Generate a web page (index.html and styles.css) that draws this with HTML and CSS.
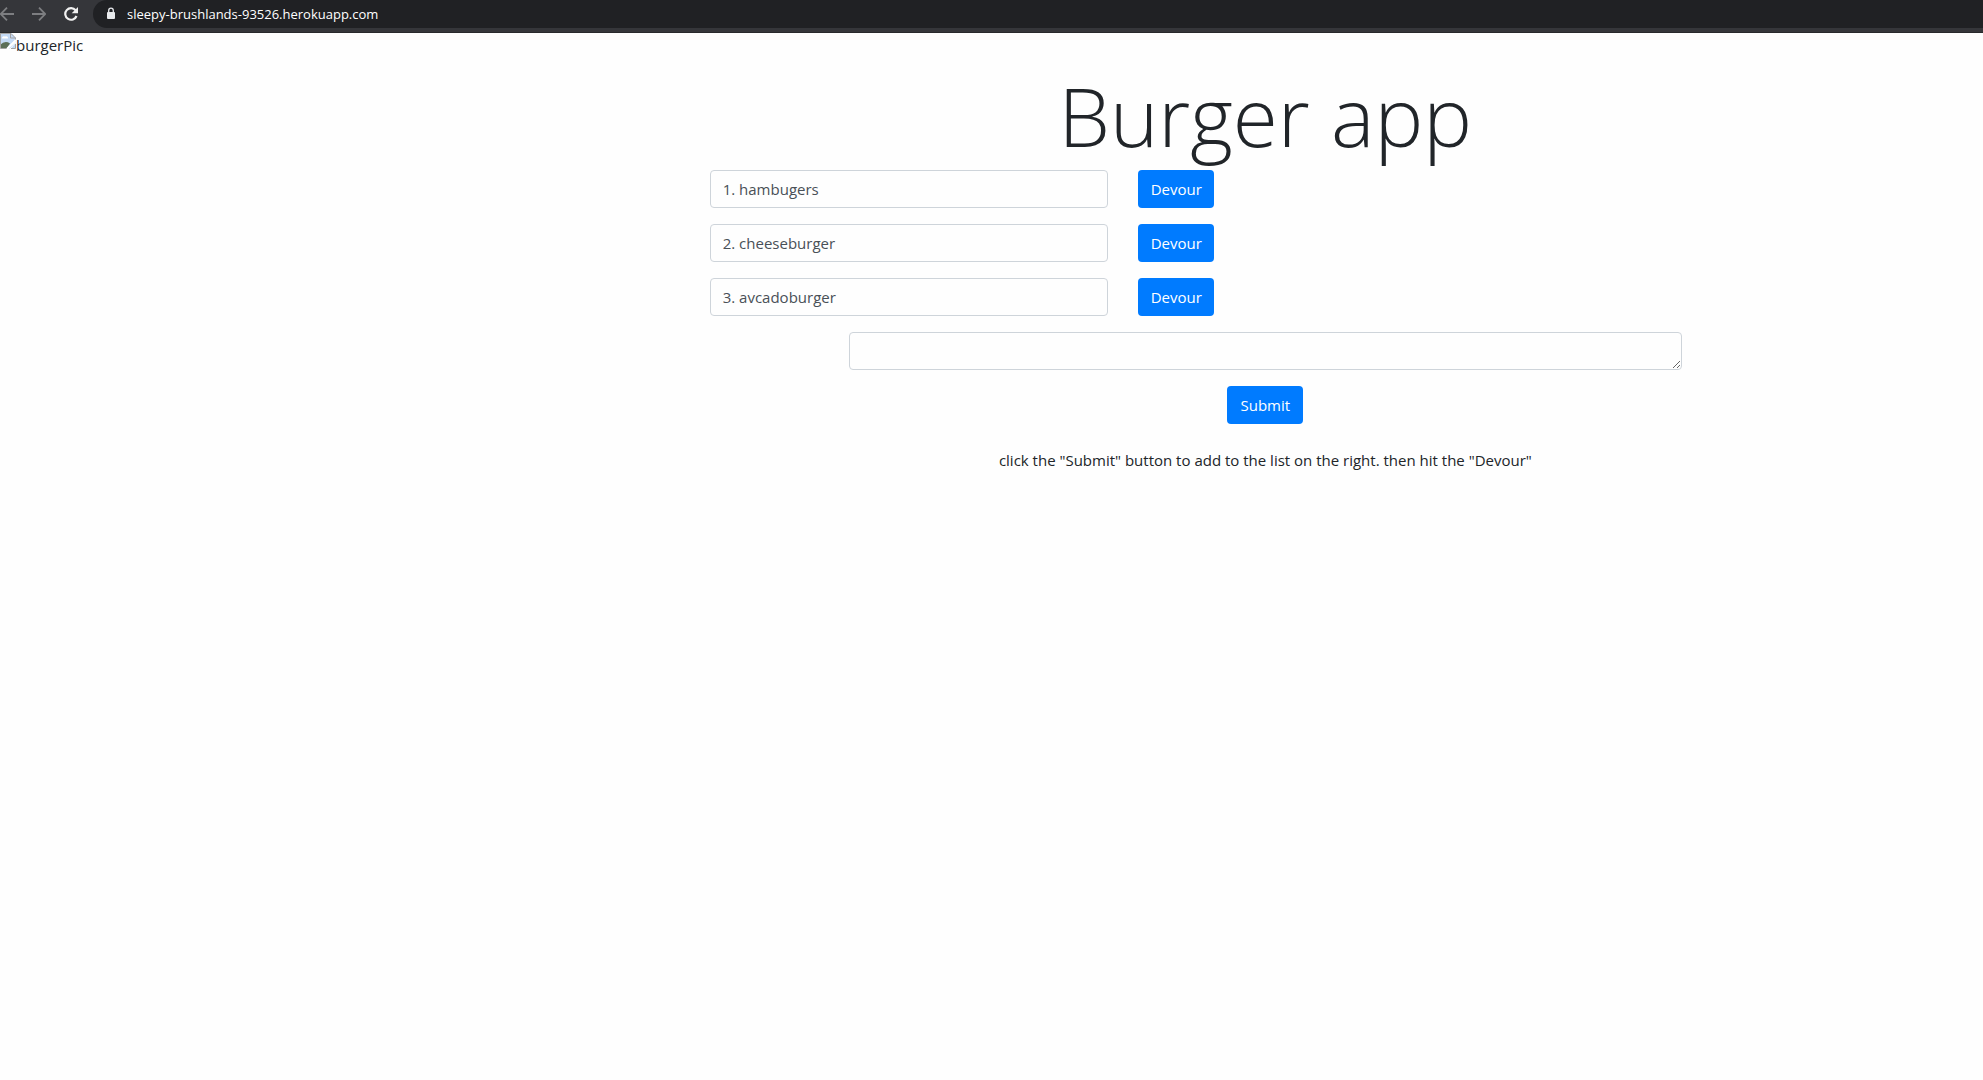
FILE: index.html
```
<!DOCTYPE html>
<html lang="en">
<head>
<meta charset="utf-8">
<title>Burger app</title>
<link rel="stylesheet" href="styles.css">
</head>
<body>
<header class="toolbar">
  <nav class="nav" aria-label="Browser">
    <button class="nav-button" type="button" aria-label="Back"><svg width="14" height="14" viewBox="0 0 14 14" fill="none" stroke="#7d7e81" stroke-width="1.800"><path d="M14 7H1.500M7 0.700L0.700 7L7 13.300"/></svg></button>
    <button class="nav-button" type="button" aria-label="Forward"><svg width="14" height="14" viewBox="0 0 14 14" fill="none" stroke="#7d7e81" stroke-width="1.800"><path d="M0 7H12.500M7 0.700L13.300 7L7 13.300"/></svg></button>
    <button class="nav-button" type="button" aria-label="Reload"><svg width="14" height="14" viewBox="0 0 14 14"><path d="M11.600 3.300A5.800 5.800 0 1 0 12.500 9" fill="none" stroke="#f1f1f1" stroke-width="2.200"/><path d="M14 0V6.300H7.700Z" fill="#f1f1f1"/></svg></button>
  </nav>
  <label class="address">
    <svg width="10" height="14" viewBox="0 0 10 14"><rect x="1" y="5" width="8" height="7" rx="1" fill="#e8eaed"/><path d="M2.700 6V3.500a2.300 2.300 0 0 1 4.600 0V6" fill="none" stroke="#e8eaed" stroke-width="1.300"/></svg>
    <input class="address-input" type="text" aria-label="Address" value="sleepy-brushlands-93526.herokuapp.com">
  </label>
</header>
<div class="page">
  <aside class="picture">
    <svg width="16" height="16" viewBox="0 0 16 16"><path d="M0 0H11L15.500 4.500V9L10 15.500H0Z" fill="#c3d9f5"/><path d="M2 5.500a2 2 0 0 1 3-2a2 2 0 0 1 3 2Z" fill="#fff"/><path d="M0 15V12Q5 7 10 10.500L7 15Z" fill="#5c6f58"/><path d="M15.500 10V15.500H11Z" fill="#c3d9f5"/><path d="M0 .5H11L15.500 5V9M.5 0V15.500H7M11 15.500H15.500V11M10.500 .5V5H15.500" fill="none" stroke="#a3a3a3"/><path d="M16 7L7 16" stroke="#fff" stroke-width="2"/></svg>
    <span>burgerPic</span>
  </aside>
  <main class="main">
    <h1 class="title">Burger app</h1>
    <div class="list">
      <form class="row"><input class="field" type="text" aria-label="Burger 1" value="1. hambugers"><button class="button" type="button">Devour</button></form>
      <form class="row"><input class="field" type="text" aria-label="Burger 2" value="2. cheeseburger"><button class="button" type="button">Devour</button></form>
      <form class="row"><input class="field" type="text" aria-label="Burger 3" value="3. avcadoburger"><button class="button" type="button">Devour</button></form>
    </div>
    <form class="add">
      <textarea class="field" rows="1" aria-label="New burger"></textarea>
      <button class="button" type="button">Submit</button>
    </form>
    <p class="hint">click the "Submit" button to add to the list on the right. then hit the "Devour"</p>
  </main>
</div>
</body>
</html>
```
FILE: styles.css
```
* {
  box-sizing: border-box;
}

body {
  margin: 0;
  min-height: 100vh;
  background: #fefefe;
  color: #212529;
  font: 15px/24px "Open Sans", "Noto Sans", sans-serif;
}

.toolbar {
  display: flex;
  height: 33px;
  padding-bottom: 4px;
  background: #35363a;
  border-bottom: 1px solid #28292c;
}

.nav {
  display: flex;
  gap: 18px;
  width: 93px;
  align-items: center;
}

.nav-button {
  display: flex;
  width: 14px;
  padding: 0;
  border: 0;
  background: none;
}

.address {
  display: flex;
  flex: 1;
  align-items: center;
  gap: 11px;
  padding-left: 13px;
  background: #202124;
  border-radius: 14px 0 0 14px;
}

.address-input {
  flex: 1;
  padding: 0;
  border: 0;
  outline: 0;
  background: none;
  color: #fff;
  font: 13px/20px "Open Sans", "Noto Sans", sans-serif;
}

.page {
  display: grid;
  grid-template-columns: 29fr 76fr;
}

.picture {
  display: flex;
}

.main {
  display: flex;
  flex-direction: column;
  gap: 16px;
}

.title {
  margin: 29px 0 -14px;
  font-size: 82px;
  font-weight: 300;
  line-height: 106px;
  text-align: center;
}

.list {
  display: grid;
  gap: 16px;
  padding-left: 162px;
}

.row {
  display: flex;
  gap: 30px;
}

.field {
  width: 100%;
  height: 38px;
  padding: 6px 12px;
  border: 1px solid #ced4da;
  border-radius: 4px;
  background: #fefefe;
  color: #495057;
  font: inherit;
}

.row .field {
  width: 31.3%;
}

.button {
  width: 76px;
  height: 38px;
  padding: 0;
  border: 0;
  border-radius: 4px;
  background: #007bff;
  color: #fff;
  font: inherit;
}

.add {
  display: flex;
  flex-direction: column;
  align-items: center;
  gap: 16px;
  width: 58%;
  margin: 0 auto;
}

.hint {
  margin: 8px 0 0;
  text-align: center;
}
```
